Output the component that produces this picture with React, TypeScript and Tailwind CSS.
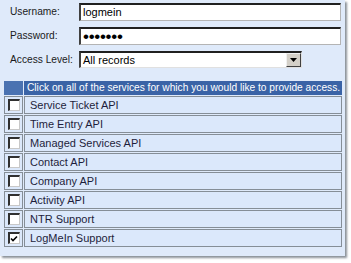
import React from 'react';

const services = [
  { name: 'Service Ticket API', checked: false },
  { name: 'Time Entry API', checked: false },
  { name: 'Managed Services API', checked: false },
  { name: 'Contact API', checked: false },
  { name: 'Company API', checked: false },
  { name: 'Activity API', checked: false },
  { name: 'NTR Support', checked: false },
  { name: 'LogMeIn Support', checked: true },
];

function Checkbox({ checked }: { checked: boolean }) {
  return (
    <div className="w-[12px] h-[12px] bg-white border-t-2 border-l-2 border-t-[#303030] border-l-[#303030] border-b border-r border-b-[#c8c8c8] border-r-[#c8c8c8] flex items-center justify-center">
      {checked && (
        <svg width="8" height="8" viewBox="0 0 8 8">
          <path d="M1 3.5 L3 5.5 L7 1.5" stroke="#000" strokeWidth="1.6" fill="none" />
        </svg>
      )}
    </div>
  );
}

function Field({ children, width = 'w-[262px]' }: { children: React.ReactNode; width?: string }) {
  return (
    <div className={`${width} h-[18px] bg-white border-t-2 border-l-2 border-t-[#202020] border-l-[#404040] border-b border-r border-b-[#b4b4b4] border-r-[#b4b4b4] flex items-center pl-[2px] text-[11px] text-black`}>
      {children}
    </div>
  );
}

export default function App() {
  return (
    <div className="w-[351px] h-[263px] bg-white" style={{ fontFamily: '"Liberation Sans", Arial, sans-serif' }}>
      <div className="w-[345px] h-[256px] bg-[#dfeafa] shadow-[2px_2px_2px_rgba(90,100,110,0.7)] pt-[3px]">
        {/* login fields */}
        <div className="flex flex-col gap-[6px] pl-[10px]">
          <div className="flex items-center">
            <span className="w-[69px] text-[10.2px] text-[#1a1a1a]">Username:</span>
            <Field>logmein</Field>
          </div>
          <div className="flex items-center">
            <span className="w-[69px] text-[10.2px] text-[#1a1a1a]">Password:</span>
            <Field>
              <span className="text-[17px] leading-none tracking-[-0.3px] -mt-px">•••••••</span>
            </Field>
          </div>
          <div className="flex items-center">
            <span className="w-[69px] text-[10.2px] text-[#1a1a1a]">Access Level:</span>
            <div className="w-[223px] h-[17px] bg-white border-t-2 border-l-2 border-t-[#202020] border-l-[#404040] border-b border-r border-b-[#e0e0e0] border-r-[#e0e0e0] flex items-center justify-between pl-[2px] text-[11px] text-black">
              <span>All records</span>
              <div className="w-[15px] h-[14px] bg-[#d4d0c8] border border-t-[#f0f0f0] border-l-[#f0f0f0] border-b-[#404040] border-r-[#404040] flex items-center justify-center">
                <svg width="7" height="4" viewBox="0 0 7 4">
                  <path d="M0 0 H7 L3.5 4 Z" fill="#000" />
                </svg>
              </div>
            </div>
          </div>
        </div>

        {/* services table */}
        <div className="ml-[4px] mt-[13px] w-[338px] flex flex-col gap-px">
          <div className="flex gap-px h-[14px]">
            <div className="w-[19px] bg-[#4a72b1]" />
            <div className="flex-1 bg-[#3a63a6] text-white text-[10.2px] leading-[14px] pl-[3px] whitespace-nowrap overflow-hidden">
              Click on all of the services for which you would like to provide access.
            </div>
          </div>
          {services.map((s) => (
            <div key={s.name} className="flex gap-px h-[18px]">
              <div className="w-[19px] bg-[#dbe8fb] border border-[#858e97] flex items-center justify-center">
                <Checkbox checked={s.checked} />
              </div>
              <div className="flex-1 bg-[#dbe8fb] border border-[#858e97] flex items-center pl-[5px] text-[11px] text-[#1e1e3c]">
                {s.name}
              </div>
            </div>
          ))}
        </div>
      </div>
    </div>
  );
}
